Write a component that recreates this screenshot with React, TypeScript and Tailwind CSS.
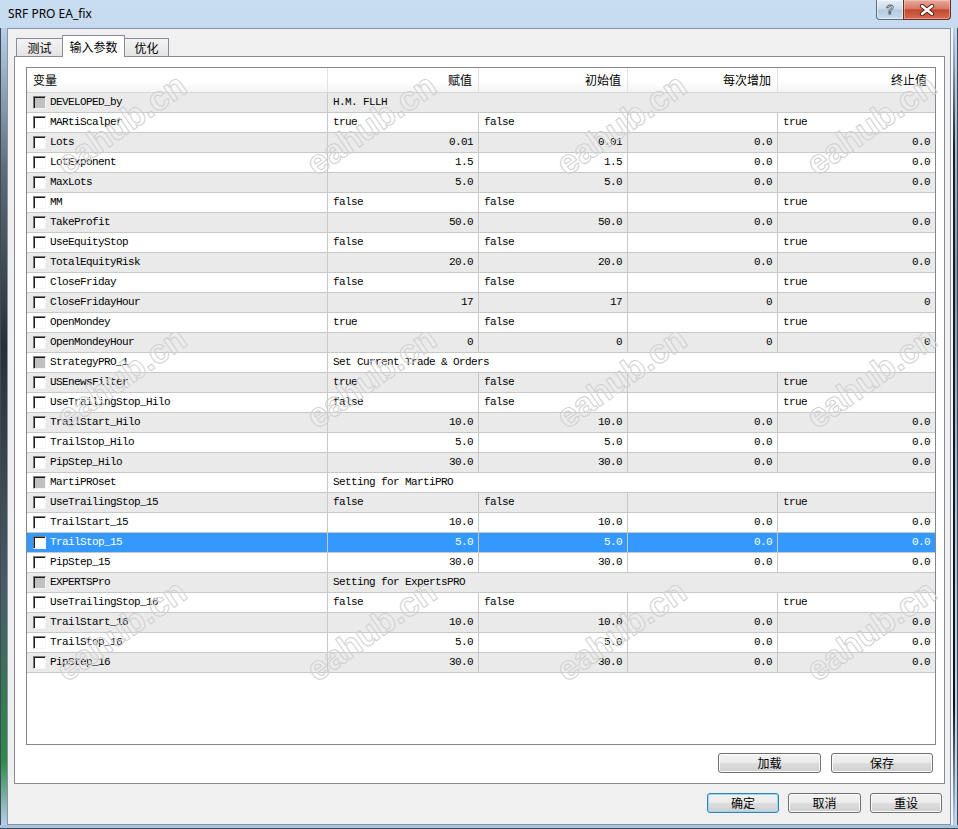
import React from 'react';

type Row = {
  name: string;
  section?: string;
  vals?: string[];
  num?: boolean;
};

const B = ['true', 'false', '', 'true'];
const BF = ['false', 'false', '', 'true'];

const ROWS: Row[] = [
  { name: 'DEVELOPED_by', section: 'H.M. FLLH' },
  { name: 'MARtiScalper', vals: B },
  { name: 'Lots', vals: ['0.01', '0.01', '0.0', '0.0'], num: true },
  { name: 'LotExponent', vals: ['1.5', '1.5', '0.0', '0.0'], num: true },
  { name: 'MaxLots', vals: ['5.0', '5.0', '0.0', '0.0'], num: true },
  { name: 'MM', vals: BF },
  { name: 'TakeProfit', vals: ['50.0', '50.0', '0.0', '0.0'], num: true },
  { name: 'UseEquityStop', vals: BF },
  { name: 'TotalEquityRisk', vals: ['20.0', '20.0', '0.0', '0.0'], num: true },
  { name: 'CloseFriday', vals: BF },
  { name: 'CloseFridayHour', vals: ['17', '17', '0', '0'], num: true },
  { name: 'OpenMondey', vals: B },
  { name: 'OpenMondeyHour', vals: ['0', '0', '0', '0'], num: true },
  { name: 'StrategyPRO_1', section: 'Set Current Trade & Orders' },
  { name: 'USEnewsFilter', vals: B },
  { name: 'UseTrailingStop_Hilo', vals: BF },
  { name: 'TrailStart_Hilo', vals: ['10.0', '10.0', '0.0', '0.0'], num: true },
  { name: 'TrailStop_Hilo', vals: ['5.0', '5.0', '0.0', '0.0'], num: true },
  { name: 'PipStep_Hilo', vals: ['30.0', '30.0', '0.0', '0.0'], num: true },
  { name: 'MartiPROset', section: 'Setting for MartiPRO' },
  { name: 'UseTrailingStop_15', vals: BF },
  { name: 'TrailStart_15', vals: ['10.0', '10.0', '0.0', '0.0'], num: true },
  { name: 'TrailStop_15', vals: ['5.0', '5.0', '0.0', '0.0'], num: true },
  { name: 'PipStep_15', vals: ['30.0', '30.0', '0.0', '0.0'], num: true },
  { name: 'EXPERTSPro', section: 'Setting for ExpertsPRO' },
  { name: 'UseTrailingStop_16', vals: BF },
  { name: 'TrailStart_16', vals: ['10.0', '10.0', '0.0', '0.0'], num: true },
  { name: 'TrailStop_16', vals: ['5.0', '5.0', '0.0', '0.0'], num: true },
  { name: 'PipStep_16', vals: ['30.0', '30.0', '0.0', '0.0'], num: true },
];

const COLS = ['w-[151px] border-r', 'w-[149px] border-r', 'w-[150px] border-r', 'flex-1'];

const WATERMARKS = [
  'left-[121px] top-[124px]', 'left-[371px] top-[124px]', 'left-[621px] top-[124px]', 'left-[871px] top-[124px]',
  'left-[121px] top-[377px]', 'left-[371px] top-[377px]', 'left-[621px] top-[377px]', 'left-[871px] top-[377px]',
  'left-[121px] top-[630px]', 'left-[371px] top-[630px]', 'left-[621px] top-[630px]', 'left-[871px] top-[630px]',
];

const Checkbox = ({ disabled }: { disabled?: boolean }) => (
  <div
    className={
      'w-[13px] h-[13px] shrink-0 border border-t-[#7a7a7a] border-l-[#7a7a7a] border-r-[#f4f4f4] border-b-[#f4f4f4] shadow-[inset_1px_1px_0_#1a1a1a] ' +
      (disabled ? 'bg-[#c0c0c0]' : 'bg-white')
    }
  />
);

const GridRow = ({ row, index }: { row: Row; index: number }) => {
  const selected = row.name === 'TrailStop_15';
  const tone = selected ? 'bg-[#3399ff] text-white' : index % 2 === 0 ? 'bg-[#eaeaea] text-black' : 'bg-white text-black';
  return (
    <div className={`flex h-[20px] border-b border-[#c8c8c8] ${tone}`}>
      <div className="w-[301px] flex items-center gap-[4px] pl-[6px] border-r border-[#c8c8c8]">
        <Checkbox disabled={!!row.section} />
        <span className="whitespace-pre">{row.name}</span>
      </div>
      {row.section ? (
        <div className="flex-1 flex items-center pl-[5px] whitespace-pre">{row.section}</div>
      ) : (
        row.vals!.map((v, i) => (
          <div
            key={i}
            className={`${COLS[i]} border-[#c8c8c8] flex items-center whitespace-pre ${row.num ? 'justify-end pr-[5px]' : 'pl-[5px]'}`}
          >
            {v}
          </div>
        ))
      )}
    </div>
  );
};

const WinButton = ({ label, w, primary }: { label: string; w: string; primary?: boolean }) => (
  <div
    className={
      `${w} h-[20px] flex items-center justify-center rounded-[3px] border text-[12px] leading-none text-black bg-[linear-gradient(#f2f2f2,#ebebeb_48%,#dddddd_52%,#cfcfcf)] ` +
      (primary ? 'border-[#3c7fb1] shadow-[inset_0_0_0_1px_#8fdcf6]' : 'border-[#707070] shadow-[inset_0_0_0_1px_#fbfbfb]')
    }
  >
    {label}
  </div>
);

export default function App() {
  return (
    <div className="relative w-[958px] h-[829px] overflow-hidden flex flex-col bg-[linear-gradient(180deg,#c9ddf1,#b7cfe8_20%,#aac3de)] font-['Noto_Sans_CJK_SC','Noto_Sans',sans-serif] text-black">
      {/* title bar */}
      <div className="h-[28px] flex items-start justify-between shrink-0">
        <div className="pl-[8px] pt-[5px] text-[12px] font-['Noto_Sans',sans-serif] text-black">SRF PRO EA_fix</div>
        <div className="flex mr-[7px]">
          <div className="w-[27px] h-[20px] rounded-bl-[4px] border border-t-0 border-r-0 border-[#5a6c80] bg-[linear-gradient(#e6eef7,#cbdaea_48%,#b4c8de_52%,#c9dbee)] flex items-center justify-center shadow-[inset_0_0_0_1px_rgba(255,255,255,0.5)]">
            <span className="text-[13px] font-bold text-white leading-none font-['Liberation_Sans',sans-serif] [-webkit-text-stroke:0.8px_#4a5868]">?</span>
          </div>
          <div className="w-[48px] h-[20px] rounded-br-[4px] border border-t-0 border-[#6b2a22] bg-[linear-gradient(#e9a99a,#d57a68_45%,#c4472f_52%,#d46b52)] flex items-center justify-center shadow-[inset_0_0_0_1px_rgba(255,220,210,0.45)]">
            <svg width="16" height="12" viewBox="0 0 16 12">
              <path d="M3 2 L13 10 M13 2 L3 10" stroke="#5a1f18" strokeWidth="4.2" strokeLinecap="round" />
              <path d="M3 2 L13 10 M13 2 L3 10" stroke="#ffffff" strokeWidth="2.4" strokeLinecap="round" />
            </svg>
          </div>
        </div>
      </div>

      <div className="flex h-[797px] shrink-0">
        {/* left frame */}
        <div className="w-[7px] bg-[linear-gradient(180deg,#b7cfe8,#5d6b78_18%,#2a2f35_40%,#4b5a66_70%,#2e8a4a_92%,#b7cfe8)] border-l border-[#3d4a58]" />

        {/* client */}
        <div className="w-[944px] border border-[#8494a6] bg-[#f0f0f0] flex flex-col pl-[6px] pr-[5px] pt-[7px]">
          {/* tabs */}
          <div className="flex items-end h-[21px] pl-[2px] -mb-px relative z-10">
            <div className="w-[47px] h-[18px] border border-b-0 border-[#898c95] bg-[linear-gradient(#f4f4f4,#e3e3e3)] text-[12px] leading-none flex items-center justify-center mb-px">
              测试
            </div>
            <div className="w-[63px] h-[22px] border border-b-0 border-[#898c95] bg-white text-[12px] leading-none flex items-center justify-center -mx-px">
              输入参数
            </div>
            <div className="w-[45px] h-[18px] border border-b-0 border-[#898c95] bg-[linear-gradient(#f4f4f4,#e3e3e3)] text-[12px] leading-none flex items-center justify-center mb-px">
              优化
            </div>
          </div>

          {/* panel */}
          <div className="w-[931px] h-[728px] border border-[#898c95] bg-white flex flex-col pl-[11px] pt-[10px]">
            <div className="w-[910px] h-[678px] border border-[#828790] bg-white flex flex-col font-['Liberation_Mono',monospace] text-[11px] tracking-[-0.6px]">
              {/* header */}
              <div className="flex h-[25px] shrink-0 border-b border-[#d5d5d5] bg-[linear-gradient(#ffffff_55%,#f3f4f6)] font-['Noto_Sans_CJK_SC',sans-serif] text-[12px] tracking-normal">
                <div className="w-[301px] flex items-center pl-[6px] border-r border-[#e3e3e3]">变量</div>
                <div className="w-[151px] flex items-center justify-end pr-[6px] border-r border-[#e3e3e3]">赋值</div>
                <div className="w-[149px] flex items-center justify-end pr-[6px] border-r border-[#e3e3e3]">初始值</div>
                <div className="w-[150px] flex items-center justify-end pr-[6px] border-r border-[#e3e3e3]">每次增加</div>
                <div className="flex-1 flex items-center justify-end pr-[8px]">终止值</div>
              </div>
              {ROWS.map((r, i) => (
                <GridRow key={r.name} row={r} index={i} />
              ))}
            </div>

            <div className="flex justify-end gap-[10px] pr-[11px] mt-[8px]">
              <WinButton label="加载" w="w-[103px]" />
              <WinButton label="保存" w="w-[102px]" />
            </div>
          </div>

          {/* dialog buttons */}
          <div className="flex justify-end gap-[9px] pr-[3px] mt-[9px]">
            <WinButton label="确定" w="w-[72px]" primary />
            <WinButton label="取消" w="w-[73px]" />
            <WinButton label="重设" w="w-[72px]" />
          </div>
        </div>

        {/* right frame */}
        <div className="flex-1 flex">
          <div className="w-[2px] bg-[#f2f6fb]" />
          <div className="w-[2px] bg-[linear-gradient(180deg,#b7cfe8,#1c1f22_15%,#101214_85%,#b7cfe8)]" />
          <div className="flex-1 bg-[linear-gradient(180deg,#c4d9ef,#7f96ad_30%,#a9c2dc_60%,#c4d9ef)] border-r border-[#3d4a58]" />
        </div>
      </div>
      <div className="flex-1 border-b border-[#3d4a58]" />

      {/* watermark overlay */}
      {WATERMARKS.map((pos) => (
        <span
          key={pos}
          className={`${pos} absolute pointer-events-none -translate-x-1/2 -translate-y-1/2 -rotate-[35deg] font-['Liberation_Sans',sans-serif] font-bold text-[34px] leading-none text-white/15 [-webkit-text-stroke:1px_#d0d0d0] whitespace-nowrap`}
        >
          eahub.cn
        </span>
      ))}
    </div>
  );
}
